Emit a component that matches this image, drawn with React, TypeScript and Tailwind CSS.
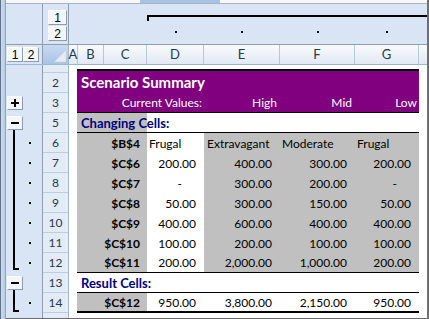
import React from 'react'

const data = [
  { n: '7', label: '$C$6', v: ['200.00', '400.00', '300.00', '200.00'] },
  { n: '8', label: '$C$7', v: ['-', '300.00', '200.00', '-'] },
  { n: '9', label: '$C$8', v: ['50.00', '300.00', '150.00', '50.00'] },
  { n: '10', label: '$C$9', v: ['400.00', '600.00', '400.00', '400.00'] },
  { n: '11', label: '$C$10', v: ['100.00', '200.00', '100.00', '100.00'] },
  { n: '12', label: '$C$11', v: ['200.00', '2,000.00', '1,000.00', '200.00'] },
]

const widths = ['w-[57px]', 'w-[76px]', 'w-[75px]', 'w-[64px]']

function LevelBtn({ children, className = '' }: { children: React.ReactNode; className?: string }) {
  return (
    <div
      className={`flex items-center justify-center bg-[#f3f6fa] border border-t-white border-l-white border-r-[#8b9bb0] border-b-[#8b9bb0] text-[12px] leading-none text-black font-['Liberation_Sans',sans-serif] ${className}`}
    >
      {children}
    </div>
  )
}

function PlusMinus({ plus }: { plus?: boolean }) {
  return (
    <div className="relative ml-[1px] w-[16px] h-[14px] bg-[#f3f6fa] border border-t-white border-l-white border-r-[#8b9bb0] border-b-[#8b9bb0] flex items-center justify-center">
      <div className="w-[8px] h-[2px] bg-black" />
      {plus && <div className="absolute w-[2px] h-[8px] bg-black" />}
    </div>
  )
}

function Dot() {
  return <div className="absolute left-[23px] top-[9px] w-[2px] h-[2px] bg-black" />
}

function Val({ v, w, gray }: { v: string; w: string; gray?: boolean }) {
  return (
    <div
      className={`${w} h-full flex items-center justify-end pt-[1px] ${v === '-' ? 'pr-[22px]' : 'pr-[8px]'} ${gray ? 'bg-[#c0c0c0]' : ''}`}
    >
      {v}
    </div>
  )
}

function Label({ text }: { text: string }) {
  return (
    <div className="w-[43px] h-full bg-[#c0c0c0] flex items-center justify-end pr-[7px] pt-[1px] font-bold whitespace-nowrap">
      {text}
    </div>
  )
}

export default function App() {
  const rowNums = ['2', '3', '5', '6', '7', '8', '9', '10', '11', '12', '13', '14']

  return (
    <div className="w-[429px] h-[319px] flex bg-white overflow-hidden font-['Lato',sans-serif]">
      {/* left window frame */}
      <div className="w-[6px] h-full flex">
        <div className="w-[1px] bg-[#5f7088]" />
        <div className="w-[4px] bg-gradient-to-r from-[#cddcef] to-[#b5cbe6]" />
        <div className="w-[1px] bg-[#8fa7c6]" />
      </div>

      <div className="flex-1 flex flex-col border-b border-[#6b6b6b]">
        {/* top strip */}
        <div className="h-[4px] flex border-b border-[#a9b4c2] bg-[#f6f8fb]">
          <div className="w-[134px]" />
          <div className="w-[80px] h-[3px] bg-[#a8c3e6]" />
        </div>

        {/* column outline area */}
        <div className="h-[41px] flex border-b border-[#8e9cad] bg-[#d9e5f4]">
          <div className="w-[37px] border-r border-[#8e9cad]" />
          <div className="w-[26px] border-r border-[#8e9cad] pl-[5px] pt-[6px] flex flex-col gap-[1px]">
            <LevelBtn className="w-[19px] h-[15px]">1</LevelBtn>
            <LevelBtn className="w-[19px] h-[15px]">2</LevelBtn>
          </div>
          <div className="flex-1 flex flex-col">
            <div className="ml-[78px] mt-[11px] h-[6px] border-t-2 border-l-2 border-black" />
            <div className="mt-[10px] flex">
              <div className="w-[78px]" />
              {widths.map((w) => (
                <div key={w} className={`${w} flex justify-center`}>
                  <div className="w-[2px] h-[2px] bg-black" />
                </div>
              ))}
            </div>
          </div>
        </div>

        {/* column headers */}
        <div className="h-[20px] flex border-b border-[#9eb6ce] text-[13px] text-[#27384d]">
          <div className="w-[37px] border-r border-[#8e9cad] bg-[#d9e5f4] flex pl-[1px] pt-[2px]">
            <LevelBtn className="w-[16px] h-[15px]">1</LevelBtn>
            <LevelBtn className="w-[16px] h-[15px]">2</LevelBtn>
          </div>
          <div className="w-[26px] border-r border-[#9eb6ce] bg-gradient-to-b from-[#c9daf0] to-[#a9c3e6]">
            <svg width="25" height="19" viewBox="0 0 25 19">
              <polygon points="23,5 23,17 11,17" fill="#e6ebf1" stroke="#c3ccd7" strokeWidth="0.5" />
            </svg>
          </div>
          <div className="flex-1 flex bg-gradient-to-b from-[#f9fbfd] to-[#e1e9f4]">
            {[
              ['A', 'w-[9px]'],
              ['B', 'w-[26px]'],
              ['C', 'w-[43px]'],
              ['D', 'w-[57px]'],
              ['E', 'w-[76px]'],
              ['F', 'w-[75px]'],
              ['G', 'w-[64px]'],
            ].map(([l, w]) => (
              <div key={l} className={`${w} border-r border-[#b5c7dc] flex items-center justify-center pt-[1px]`}>
                {l}
              </div>
            ))}
            <div className="flex-1" />
          </div>
        </div>

        {/* sheet body */}
        <div className="flex-1 flex">
          {/* row outline */}
          <div className="w-[37px] border-r border-[#8e9cad] bg-[#d9e5f4] flex flex-col">
            <div className="h-[8px]" />
            <div className="h-[20px]" />
            <div className="h-[20px] flex items-center">
              <PlusMinus plus />
            </div>
            <div className="relative h-[20px] flex items-center">
              <PlusMinus />
              <div className="absolute left-[7px] top-[17px] w-[2px] h-[3px] bg-black" />
            </div>
            {['6', '7', '8', '9', '10', '11'].map((n) => (
              <div key={n} className="relative h-[20px]">
                <div className="ml-[7px] w-[2px] h-full bg-black" />
                <Dot />
              </div>
            ))}
            <div className="relative h-[20px]">
              <div className="ml-[7px] w-[6px] h-[17px] border-l-2 border-b-2 border-black" />
              <Dot />
            </div>
            <div className="relative h-[20px] flex items-center">
              <PlusMinus />
              <div className="absolute left-[7px] top-[17px] w-[2px] h-[3px] bg-black" />
            </div>
            <div className="relative h-[20px]">
              <div className="ml-[7px] w-[6px] h-[19px] border-l-2 border-b-2 border-black" />
              <Dot />
            </div>
            <div className="flex-1" />
          </div>

          {/* row headers */}
          <div className="w-[26px] border-r border-[#9eb6ce] bg-[#e3ebf6] flex flex-col text-[12px] text-[#27384d]">
            <div className="h-[8px] border-b border-[#bccde2]" />
            {rowNums.map((n) => (
              <div key={n} className="h-[20px] border-b border-[#bccde2] flex items-center justify-center pt-[1px]">
                {n}
              </div>
            ))}
            <div className="flex-1" />
          </div>

          {/* cells */}
          <div className="flex-1 flex flex-col text-[12px] text-black leading-none">
            <div className="h-[4px]" />

            {/* row 2 */}
            <div className="h-[24px] flex">
              <div className="w-[8px]" />
              <div className="w-[342px] border-t-2 border-black bg-[#800080] flex items-center pl-[4px] pt-[1px] text-white font-bold text-[15px]">
                Scenario Summary
              </div>
            </div>

            {/* row 3 */}
            <div className="h-[20px] flex">
              <div className="w-[8px]" />
              <div className="w-[342px] flex border-b border-black bg-[#800080] text-white">
                <div className="w-[127px] flex items-center justify-end pr-[2px] pt-[1px]">Current Values:</div>
                <div className="w-[76px] flex items-center justify-end pr-[3px] pt-[1px]">High</div>
                <div className="w-[75px] flex items-center justify-end pr-[3px] pt-[1px]">Mid</div>
                <div className="w-[64px] flex items-center justify-end pr-[2px] pt-[1px]">Low</div>
              </div>
            </div>

            {/* row 5 */}
            <div className="h-[20px] flex">
              <div className="w-[8px]" />
              <div className="w-[342px] flex border-b border-black">
                <div className="w-[70px] h-full bg-[#c0c0c0] flex items-center pl-[4px] pt-[1px] whitespace-nowrap font-bold text-[13px] text-[#000080]">
                  Changing Cells:
                </div>
              </div>
            </div>

            {/* row 6 */}
            <div className="h-[20px] flex">
              <div className="w-[8px]" />
              <div className="w-[27px] bg-[#c0c0c0]" />
              <Label text="$B$4" />
              <div className="w-[57px] flex items-center pl-[2px] pt-[1px]">Frugal</div>
              <div className="w-[76px] bg-[#c0c0c0] flex items-center pl-[3px] pt-[1px]">Extravagant</div>
              <div className="w-[75px] bg-[#c0c0c0] flex items-center pl-[2px] pt-[1px]">Moderate</div>
              <div className="w-[64px] bg-[#c0c0c0] flex items-center pl-[2px] pt-[1px]">Frugal</div>
            </div>

            {/* rows 7-12 */}
            {data.map((r, i) => (
              <div key={r.n} className="h-[20px] flex">
                <div className="w-[8px]" />
                <div className={`w-[342px] flex ${i === data.length - 1 ? 'border-b border-black' : ''}`}>
                  <div className="w-[27px] bg-[#c0c0c0]" />
                  <Label text={r.label} />
                  <Val v={r.v[0]} w={widths[0]} />
                  <Val v={r.v[1]} w={widths[1]} gray />
                  <Val v={r.v[2]} w={widths[2]} gray />
                  <Val v={r.v[3]} w={widths[3]} gray />
                </div>
              </div>
            ))}

            {/* row 13 */}
            <div className="h-[20px] flex">
              <div className="w-[8px]" />
              <div className="w-[342px] flex items-center border-b border-black pl-[4px] pt-[1px] font-bold text-[13px] text-[#000080]">
                Result Cells:
              </div>
            </div>

            {/* row 14 */}
            <div className="h-[20px] flex">
              <div className="w-[8px]" />
              <div className="w-[342px] flex border-b-2 border-black">
                <div className="w-[27px] bg-[#c0c0c0]" />
                <Label text="$C$12" />
                <Val v="950.00" w={widths[0]} />
                <Val v="3,800.00" w={widths[1]} />
                <Val v="2,150.00" w={widths[2]} />
                <Val v="950.00" w={widths[3]} />
              </div>
            </div>
          </div>
        </div>
      </div>

      {/* right window frame */}
      <div className="w-[2px] h-full bg-[#707070]" />
    </div>
  )
}
